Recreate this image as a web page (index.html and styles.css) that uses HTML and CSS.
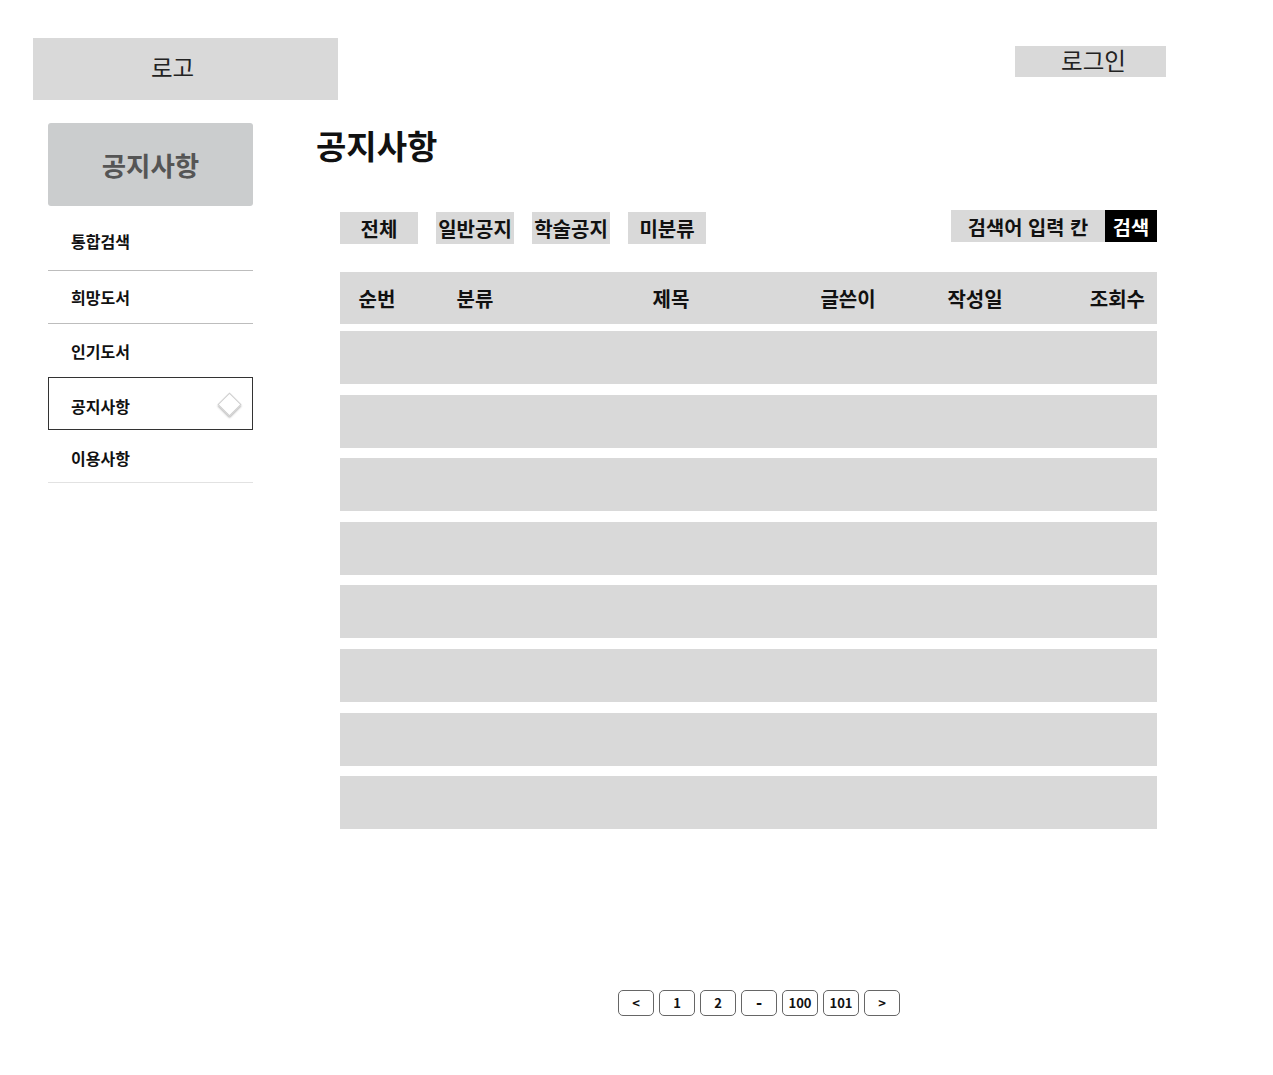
FILE: index.html
```html
<!DOCTYPE html>
<html lang="ko">
  <head>
    <meta charset="UTF-8" />
    <meta name="viewport" content="width=device-width, initial-scale=1.0" />
    <title>공지사항</title>
    <link rel="stylesheet" href="styles.css">
  </head>
  <body>
    <header class="top-bar">
      <div class="logo">로고</div>
      <a class="login" href="#">로그인</a>
    </header>

    <div class="layout">
      <aside class="side-nav">
        <div class="side-title">공지사항</div>
        <ul class="side-menu">
          <li class="line first">통합검색</li>
          <li class="line">희망도서</li>
          <li>인기도서</li>
          <li class="active">
            공지사항
            <span class="diamond"></span>
          </li>
          <li class="line light">이용사항</li>
        </ul>
      </aside>

      <main class="content">
        <h1>공지사항</h1>

        <div class="toolbar">
          <div class="tabs">
            <button>전체</button>
            <button>일반공지</button>
            <button>학술공지</button>
            <button>미분류</button>
          </div>
          <div class="search">
            <span class="search-input">검색어 입력 칸</span>
            <button class="search-btn">검색</button>
          </div>
        </div>

        <div class="board">
          <div class="board-head">
            <span>순번</span>
            <span>분류</span>
            <span>제목</span>
            <span>글쓴이</span>
            <span>작성일</span>
            <span class="right">조회수</span>
          </div>
          <div class="board-row"></div>
          <div class="board-row"></div>
          <div class="board-row"></div>
          <div class="board-row"></div>
          <div class="board-row"></div>
          <div class="board-row"></div>
          <div class="board-row"></div>
          <div class="board-row"></div>
        </div>

        <nav class="pager">
          <button>&lt;</button>
          <button>1</button>
          <button>2</button>
          <button class="dash">-</button>
          <button>100</button>
          <button>101</button>
          <button>&gt;</button>
        </nav>
      </main>
    </div>
  </body>
</html>
```

FILE: styles.css
```css
/* Base */
html,
body {
  margin: 0;
  padding: 0;
  background: #fff;
  color: #111;
  font-family: "Noto Sans CJK KR", "Noto Sans", sans-serif;
}
button {
  font-family: inherit;
  border: none;
  cursor: pointer;
}

/* Top bar */
.top-bar {
  display: flex;
  align-items: flex-start;
  padding: 38px 0 0 33px;
}
.logo {
  width: 305px;
  height: 62px;
  box-sizing: border-box;
  padding: 0 26px 4px 0;
  background: #d9d9d9;
  display: flex;
  align-items: center;
  justify-content: center;
  font-size: 23.5px;
  color: #222;
}
.login {
  margin: 8px 0 0 677px;
  width: 151px;
  height: 31px;
  box-sizing: border-box;
  padding: 0 0 3px 6px;
  background: #d9d9d9;
  display: flex;
  align-items: center;
  justify-content: center;
  font-size: 23.5px;
  color: #222;
  text-decoration: none;
}

/* Layout */
.layout {
  display: flex;
  padding: 23px 0 0 48px;
}

/* Side nav */
.side-nav {
  width: 205px;
  flex-shrink: 0;
}
.side-title {
  height: 83px;
  background: #cbcdce;
  border-radius: 3px;
  display: flex;
  align-items: center;
  justify-content: center;
  font-size: 26.5px;
  font-weight: bold;
  color: #555;
}
.side-menu {
  list-style: none;
  margin: 12px 0 0;
  padding: 0;
}
.side-menu li {
  height: 53px;
  box-sizing: border-box;
  padding-left: 23px;
  display: flex;
  align-items: center;
  font-size: 16px;
  font-weight: bold;
  position: relative;
}
.side-menu li.first {
  padding-bottom: 6px;
}
.side-menu li.line {
  border-bottom: 1px solid #bdbdbd;
}
.side-menu li.line.light {
  border-bottom-color: #e2e2e2;
  padding-top: 3px;
}
.side-menu li.active {
  border: 1px solid #333;
  padding: 4px 0 0 22px;
}
.diamond {
  position: absolute;
  right: 14px;
  top: 18px;
  width: 15px;
  height: 15px;
  background: #fff;
  border: 1px solid #cfcfcf;
  transform: rotate(45deg);
  box-shadow: 1px 1px 2px rgba(0, 0, 0, 0.3);
}

/* Content */
.content {
  margin-left: 63px;
  width: 841px;
}
.content h1 {
  margin: 0;
  font-size: 33px;
  line-height: 44px;
  font-weight: bold;
}

/* Toolbar */
.toolbar {
  display: flex;
  justify-content: space-between;
  align-items: flex-start;
  margin: 43px 0 0 24px;
  width: 817px;
}
.tabs {
  display: flex;
  gap: 18px;
  margin-top: 2px;
}
.tabs button {
  width: 78px;
  height: 32px;
  padding: 0;
  background: #d9d9d9;
  font-size: 20px;
  font-weight: bold;
  color: #111;
}
.search {
  display: flex;
}
.search-input {
  width: 154px;
  height: 32px;
  background: #d9d9d9;
  display: flex;
  align-items: center;
  justify-content: center;
  font-size: 19.8px;
  font-weight: bold;
}
.search-btn {
  width: 52px;
  height: 32px;
  padding: 0;
  background: #000;
  color: #fff;
  font-size: 19.8px;
  font-weight: bold;
}

/* Board */
.board {
  margin: 28px 0 0 24px;
  width: 817px;
  display: flex;
  flex-direction: column;
  gap: 10.6px;
}
.board-head {
  height: 52px;
  margin-bottom: -3.6px;
  background: #d9d9d9;
  display: grid;
  grid-template-columns: 74px 122px 270px 84px 170px 1fr;
  align-items: center;
  text-align: center;
  font-size: 20px;
  font-weight: bold;
}
.board-head .right {
  text-align: right;
  padding-right: 12px;
}
.board-row {
  height: 53px;
  background: #d9d9d9;
}

/* Pager */
.pager {
  display: flex;
  gap: 5px;
  margin: 161px 0 0 302px;
}
.pager button {
  width: 36px;
  height: 26px;
  padding: 0 0 1px;
  background: #fff;
  border: 1px solid #666;
  border-radius: 5px;
  font-size: 13px;
  font-weight: bold;
  color: #111;
}
.pager button.dash {
  font-size: 16px;
  font-weight: 900;
}
```
